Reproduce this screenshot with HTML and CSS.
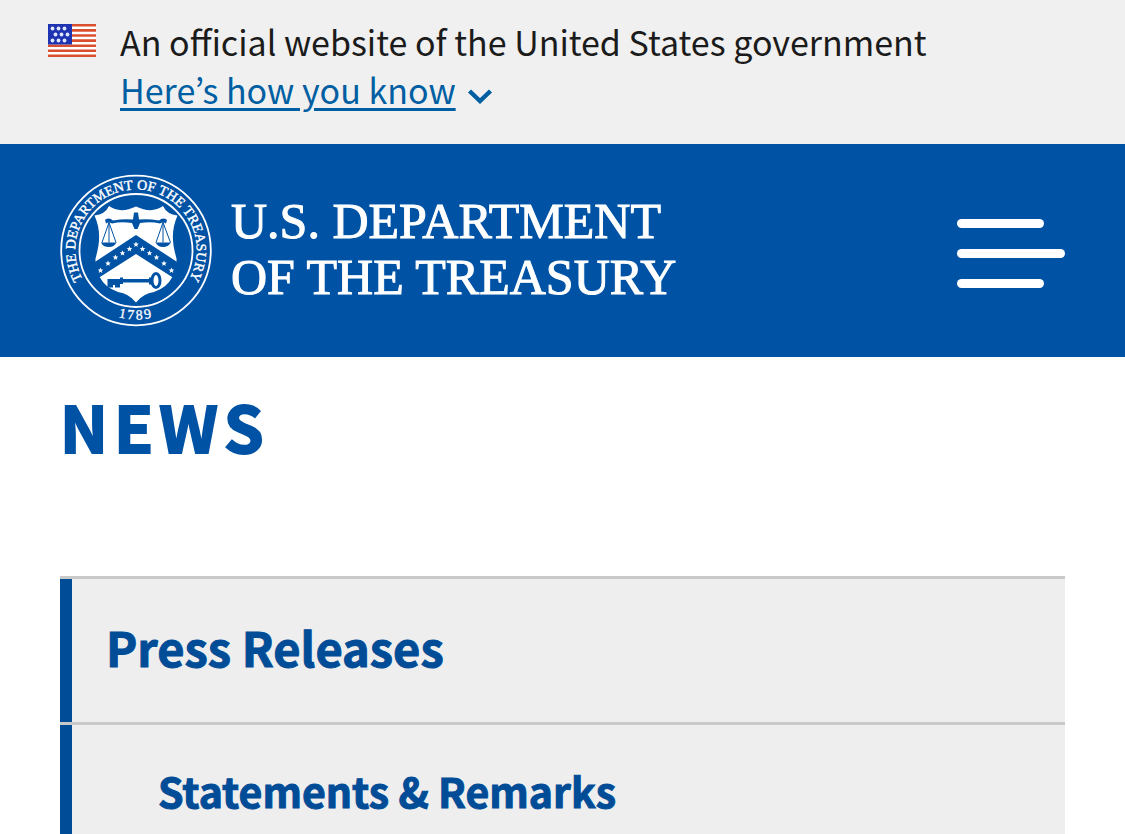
FILE: index.html
```html
<!DOCTYPE html>
<html lang="en">
<head>
<meta charset="utf-8">
<meta name="viewport" content="width=device-width, initial-scale=1">
<title>News | U.S. Department of the Treasury</title>
<link rel="stylesheet" href="styles.css">
</head>
<body>
<section class="banner" aria-label="Official government website">
  <svg class="flag" viewBox="0 0 48 33" aria-hidden="true">
    <rect width="48" height="33" fill="#fff"/>
    <path stroke="#d9502f" stroke-width="2.6" d="M0 1.3h48M0 6.4h48M0 11.5h48M0 16.6h48M0 21.7h48M0 26.7h48M0 31.7h48"/>
    <rect width="24" height="20.5" fill="#1e33b1"/>
    <g fill="#dfe6ff">
      <circle cx="4.5" cy="4.5" r="1.9"/><circle cx="10.5" cy="4.5" r="1.9"/><circle cx="16.5" cy="4.5" r="1.9"/>
      <circle cx="7.5" cy="10.5" r="1.9"/><circle cx="13.5" cy="10.5" r="1.9"/><circle cx="19.5" cy="10.5" r="1.9"/>
      <circle cx="4.5" cy="16.5" r="1.9"/><circle cx="10.5" cy="16.5" r="1.9"/><circle cx="16.5" cy="16.5" r="1.9"/>
    </g>
  </svg>
  <div class="banner-text">
    <p class="banner-line">An official website of the United States government</p>
    <button class="banner-toggle" type="button" aria-expanded="false">
      <span class="banner-label">Here’s how you know</span>
      <svg class="chevron" viewBox="0 0 24 16" aria-hidden="true"><path d="M1.500 3l10.500 10 10.500-10" fill="none" stroke="currentColor" stroke-width="4.400"/></svg>
    </button>
  </div>
</section>

<header class="header">
  <a class="brand" href="#">
    <svg class="seal" viewBox="0 0 152 152" aria-hidden="true">
      <defs>
        <path id="ring-top" d="M24.100 107.2A60.700 60.700 0 1 1 127.900 107.2"/>
        <path id="ring-bottom" d="M7 76A69 69 0 0 0 145 76"/>
        <path id="star" d="M0-2.9L.8-.9 2.8-.9 1.200.4 1.8 2.4 0 1.200-1.8 2.4-1.200.4-2.8-.9-.8-.9z"/>
      </defs>
      <circle cx="76" cy="76" r="74.800" fill="none" stroke="#fff" stroke-width="1.800"/>
      <circle cx="76" cy="76" r="56.500" fill="none" stroke="#fff" stroke-width="1.800"/>
      <text class="seal-text" stroke="#fff" stroke-width=".4"><textPath href="#ring-top" startOffset="50%" text-anchor="middle">THE DEPARTMENT OF THE TREASURY</textPath></text>
      <text class="seal-year" stroke="#fff" stroke-width=".3"><textPath href="#ring-bottom" startOffset="50%" text-anchor="middle">1789</textPath></text>
      <path fill="#fff" d="M34.500 41Q45 40 49 31.500Q60 39.500 76 32Q92 39.500 103 31.500Q107 40 117.500 41C111 56 112 68 116.500 84Q117 94 112 103Q107 113 94 117.500Q83 119 76 128Q69 119 58 117.500Q45 113 40 103Q35 94 35.500 84C40 68 41 56 34.500 41z"/>
      <path fill="#0052a5" d="M76 60.500L121 90 116 105 76 79.500 36 105 31 90z"/>
      <g fill="#fff">
        <use href="#star" x="76" y="70"/><use href="#star" x="69.500" y="74.500"/><use href="#star" x="62.500" y="78.700"/><use href="#star" x="55.500" y="83"/><use href="#star" x="48" y="89"/><use href="#star" x="40.500" y="96"/>
        <use href="#star" x="82.500" y="74.500"/><use href="#star" x="89.500" y="78.700"/><use href="#star" x="96.500" y="83"/><use href="#star" x="104" y="89"/><use href="#star" x="111.500" y="96"/>
      </g>
      <g fill="#0052a5">
        <path d="M45 45.500Q49 42.500 53 46Q64 44 73 45L74 38H78L79 45Q88 44 99 46Q103 42.500 107 45.500L106 49Q103 47 100 49Q91 47 80 48.500L77.500 54.500H74.500L72 48.500Q61 47 52 49Q49 47 46 49z"/>
        <path d="M41 68H56.500Q54 72.500 49 72.500Q43 72.500 41 68zM95.500 68H111Q108 72.500 103 72.500Q98 72.500 95.500 68z"/>
        <path d="M49 48L42 68M49 48L56 68M49 48V68M103 48L96 68M103 48L110.500 68M103 48V68" stroke="#0052a5" stroke-width="1"/>
        <path d="M47.500 104.500H93V108H60V113H55V110.500H53V113H47.500z"/>
        <path d="M60 103h3v6.500h-3zM89 103h3v7h-3z"/>
      </g>
      <ellipse cx="96" cy="106" rx="4" ry="7" fill="#fff" stroke="#0052a5" stroke-width="3"/>
    </svg>
    <span class="brand-name">U.S. DEPARTMENT<br>OF THE TREASURY</span>
  </a>
  <button class="menu" type="button" aria-label="Menu">
    <span class="bar bar-short"></span>
    <span class="bar"></span>
    <span class="bar bar-short"></span>
  </button>
</header>

<main class="main">
  <h1 class="title">NEWS</h1>
  <nav class="side-nav" aria-label="News">
    <a class="nav-link" href="#">Press Releases</a>
    <a class="nav-link nav-sub" href="#">Statements &amp; Remarks</a>
  </nav>
</main>
</body>
</html>
```

FILE: styles.css
```css
* { box-sizing: border-box; }

body {
  margin: 0;
  background: #fff;
  color: #1b1b1b;
  font-family: "Noto Sans CJK KR", "Open Sans", sans-serif;
}

.banner {
  display: flex;
  gap: 24px;
  padding: 18px 48px 30px;
  background: #f0f0f0;
  font-size: 34px;
  line-height: 48px;
}
.flag { flex: none; width: 48px; height: 33px; margin-top: 6px; }
.banner-line { margin: 0; }
.banner-toggle {
  display: flex;
  align-items: center;
  gap: 12px;
  padding: 0;
  border: 0;
  background: none;
  color: #005ea2;
  font: inherit;
}
.banner-label {
  text-decoration: underline;
  text-decoration-thickness: 3px;
  text-underline-offset: 4px;
}
.chevron { width: 24px; height: 16px; margin-top: 12px; }

.header {
  display: flex;
  align-items: center;
  justify-content: space-between;
  padding: 30px 60px;
  background: #0052a5;
}
.brand {
  display: flex;
  align-items: center;
  gap: 19px;
  color: #fff;
  text-decoration: none;
}
.seal { flex: none; width: 152px; height: 153px; }
.seal-text, .seal-year {
  fill: #fff;
  font-family: "Liberation Serif", serif;
  font-size: 14px;
}
.seal-year { letter-spacing: 2px; }
.brand-name {
  padding-bottom: 4px;
  font-family: "Liberation Serif", serif;
  font-size: 50px;
  line-height: 56px;
  -webkit-text-stroke: 1px #fff;
}
.menu {
  display: flex;
  flex-direction: column;
  gap: 21px;
  width: 108px;
  margin-top: 6px;
  padding: 0;
  border: 0;
  background: none;
}
.bar { width: 100%; height: 9px; border-radius: 5px; background: #fff; }
.bar-short { width: 87px; }

.main { padding: 20px 60px 0; }
.title {
  margin: 0 0 103px;
  color: #0052a5;
  font-size: 64px;
  font-weight: 700;
  line-height: 96px;
  letter-spacing: 6px;
  -webkit-text-stroke: 2px #0052a5;
}
.side-nav { display: flex; flex-direction: column; }
.nav-link {
  padding: 32px 34px 39px 46px;
  border-top: 3px solid #c9c9c9;
  background: linear-gradient(to right, #004c97 12px, #eee 12px);
  color: #004c97;
  font-size: 47px;
  font-weight: 700;
  line-height: 72px;
  text-decoration: none;
  -webkit-text-stroke: 1px #004c97;
}
.nav-sub { padding-left: 98px; font-size: 41px; line-height: 66px; }
```
